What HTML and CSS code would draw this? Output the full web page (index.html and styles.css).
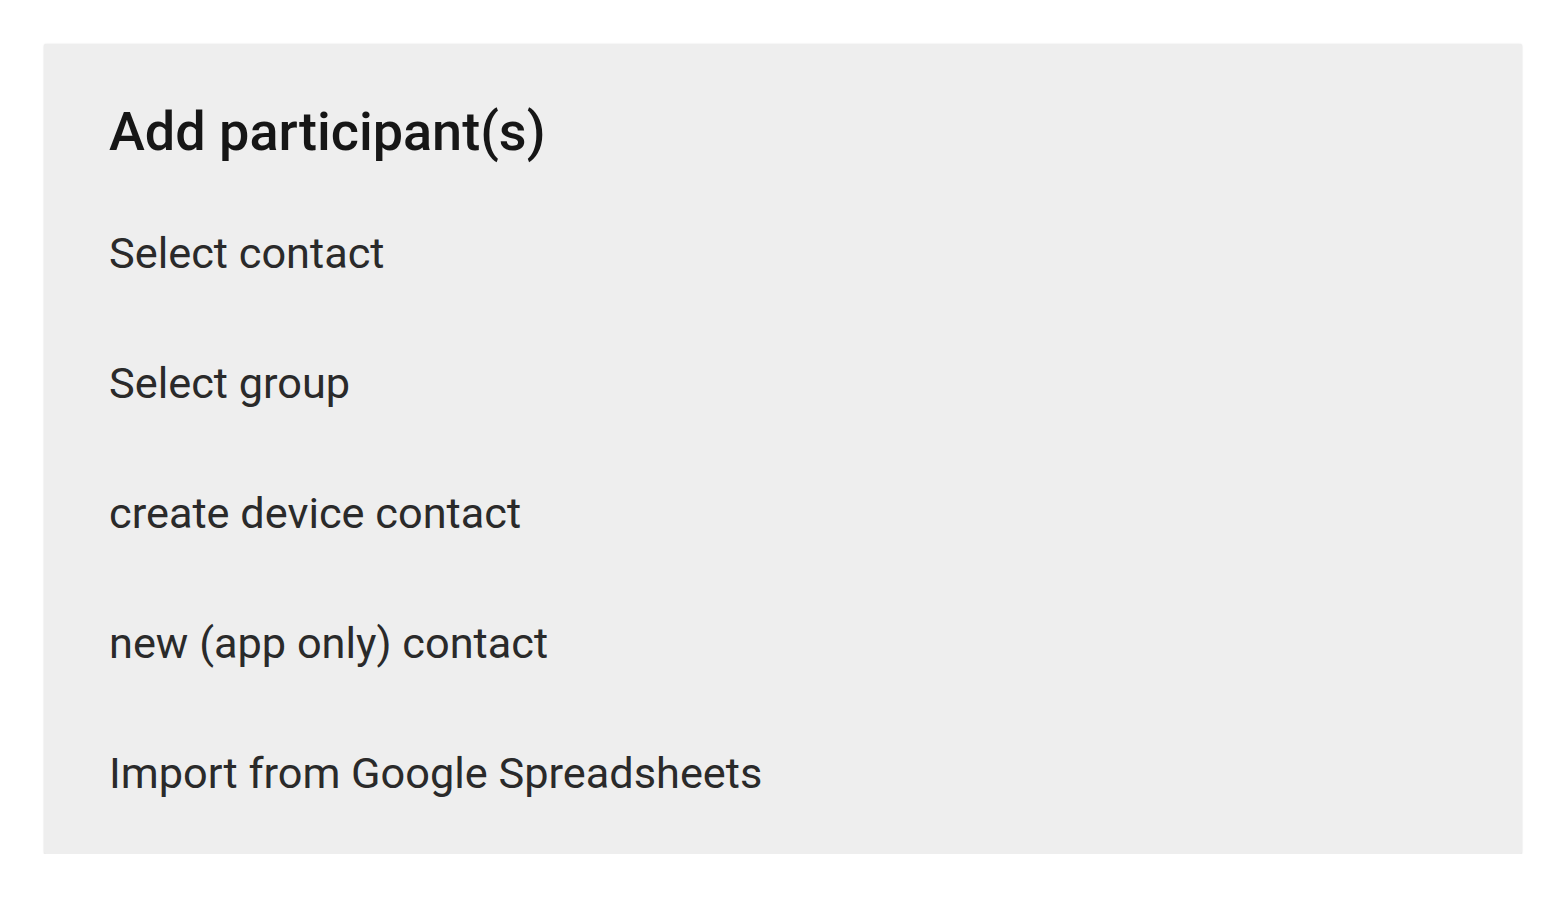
FILE: index.html
```html
<!DOCTYPE html>
<html lang="en">
<head>
<meta charset="utf-8">
<title>Add participant(s)</title>
<link rel="stylesheet" href="styles.css">
</head>
<body>
<div class="dialog">
  <h1 class="dialog-title">Add participant(s)</h1>
  <ul class="menu">
    <li class="menu-item">Select contact</li>
    <li class="menu-item">Select group</li>
    <li class="menu-item">create device contact</li>
    <li class="menu-item">new (app only) contact</li>
    <li class="menu-item">Import from Google Spreadsheets</li>
  </ul>
</div>
</body>
</html>
```

FILE: styles.css
```css
html, body {
  margin: 0;
  padding: 0;
  background: #ffffff;
}
body {
  padding: 44px 45px 0 44px;
  font-family: Roboto, "Noto Sans", "Liberation Sans", sans-serif;
}
.dialog {
  background: #eeeeee;
  height: 810px;
  box-sizing: border-box;
  padding: 47px 0 14px 65px;
  box-shadow: 0 0 2px rgba(0, 0, 0, 0.12), 0 1px 2px rgba(0, 0, 0, 0.06);
  border-radius: 2px;
}
.dialog-title {
  margin: 0 0 16px 0;
  font-size: 54px;
  font-weight: 500;
  line-height: 82px;
  color: #161616;
}
.menu {
  list-style: none;
  margin: 0;
  padding: 0;
}
.menu-item {
  height: 130px;
  line-height: 130px;
  font-size: 43.3px;
  color: #2a2a2a;
}
```
